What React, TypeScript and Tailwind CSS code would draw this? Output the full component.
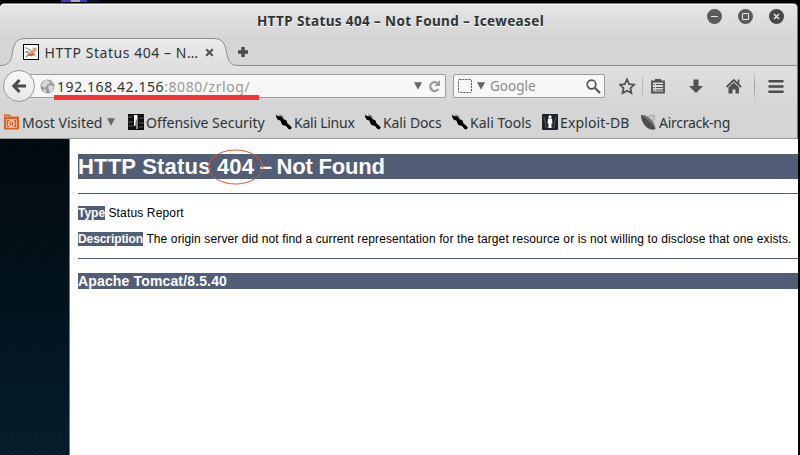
import type { ReactNode } from "react";

const sans = "font-['Noto_Sans','Open_Sans',sans-serif]";
const arial = "font-['Liberation_Sans',Arial,sans-serif]";

function TabShape() {
  const edge = "C7 27.500 10.500 25 12 17C14 6 15 .5 26 .5H213C223 .5 225 6 226.500 14C228.500 24 230 27.500 239 27.500H245";
  return (
    <svg className="absolute left-0 top-0" width="245" height="29" viewBox="0 0 245 29">
      <defs>
        <linearGradient id="tab" x1="0" y1="0" x2="0" y2="1">
          <stop offset="0" stopColor="#ebebeb" />
          <stop offset="1" stopColor="#dfdfdf" />
        </linearGradient>
      </defs>
      <path d={`M0 29V27.500${edge}V29Z`} fill="url(#tab)" />
      <path d={`M0 27.500${edge}`} fill="none" stroke="#8e8e8e" />
    </svg>
  );
}

function Favicon() {
  return (
    <svg width="16" height="16" viewBox="0 0 16 16" className="shrink-0">
      <rect x=".5" y=".5" width="15" height="15" fill="#fff" stroke="#000" />
      <path d="M2 3.500l3 1.500 3 1M2 8h3l1 2-3 3" stroke="#8d8d8d" fill="none" strokeWidth="1.300" />
      <path d="M9.500 3l1 1h2l1-1v3.500l-1.500 1.500-2-.5zM6 8l3-2 3 2-1.500 1.500-2.500.5z" fill="#dd9a78" />
      <path d="M5 10l3.500-.5 2.500-.5 1 1.500-3 1.800-3.500-.3z" fill="#e2602a" />
      <path d="M11 10.500l2.500 2" stroke="#999" />
    </svg>
  );
}

function WindowButton({ kind }: { kind: "min" | "max" | "close" }) {
  return (
    <svg width="16" height="16" viewBox="0 0 16 16">
      <circle cx="8.500" cy="8.500" r="7.500" fill={kind === "close" ? "#494949" : "#5b5b5b"} />
      {kind === "min" && <path d="M5 8.500h7" stroke="#e6e6e6" />}
      {kind === "max" && <path d="M5.500 5.500h6v6h-6z" fill="none" stroke="#e6e6e6" />}
      {kind === "close" && <path d="M6 6l5 5M11 6l-5 5" stroke="#e6e6e6" strokeWidth="1.500" />}
    </svg>
  );
}

function Globe() {
  return (
    <svg width="15" height="15" viewBox="0 0 15 15" className="shrink-0">
      <circle cx="7.500" cy="7.500" r="7" fill="#9a9a9a" />
      <path d="M6 1l3 1 1 2-3 2-2 3-3-2L1 7l2-4zM8 7l3-1 3 2-2 4-2 2-1-3zM3 10l3 1v3l-2-1zM11 2l2 2-2 0z" fill="#d9d9d9" />
    </svg>
  );
}

function Down() {
  return (
    <svg width="8" height="8" viewBox="0 0 8 8" className="shrink-0">
      <path d="M0 .3h8L4 7.800z" fill="#666" />
    </svg>
  );
}

function FolderIcon() {
  return (
    <svg width="16" height="16" viewBox="0 0 16 16" className="shrink-0">
      <path d="M0 .5h6l1 2h8v13H0z" fill="#d9622b" />
      <path d="M1 2.500h4.500M2.500 5.500h10v8h-10z" fill="none" stroke="#f1c3a8" strokeWidth=".8" />
      <circle cx="7.500" cy="9.500" r="2.800" fill="#d9622b" stroke="#fbe5d8" strokeWidth="1.200" />
      <path d="M7.500 8.500v2" stroke="#fbe5d8" />
    </svg>
  );
}

function OffsecIcon() {
  return (
    <svg width="16" height="16" viewBox="0 0 16 16" className="shrink-0">
      <path d="M0 0h16v16H0z" fill="#0c0e10" />
      <path d="M0 3h5M11 4h5M0 8h5M11 9h5M1 12h4M11 13h4" stroke="#3d4346" strokeWidth="1.500" />
      <path d="M6 1h3.500v14H8.500V6L8 5 7.500 12H6z" fill="#fff" />
    </svg>
  );
}

function KaliIcon() {
  return (
    <svg width="16" height="16" viewBox="0 0 16 16" className="shrink-0">
      <path d="M0 .5L2 2l4 .5L7.500 5l3 1.500 1 3L13.500 11l2.300 2.500-1.300 2L12.500 15 10 12 6.500 11 5 8.500 4.500 6.500 2 6 .3 3.500z" fill="#000" />
      <path d="M3 .8l3 .7 2 2" stroke="#555" strokeWidth=".7" fill="none" />
    </svg>
  );
}

function ExploitIcon() {
  return (
    <svg width="16" height="16" viewBox="0 0 16 16" className="shrink-0">
      <rect width="16" height="16" rx="1" fill="#1b2228" />
      <path d="M2 3l2 9M14 3l-2 9M3 13h10" stroke="#56626b" />
      <circle cx="8" cy="2.800" r="1.600" fill="#fff" />
      <path d="M6 4.500h4l.5 5H9.500L9.500 14H6.500V9.500h-1z" fill="#fff" />
    </svg>
  );
}

function DishIcon() {
  return (
    <svg width="16" height="16" viewBox="0 0 16 16" className="shrink-0">
      <path d="M6 1l7-1 2 3-1 8z" fill="#c9cbce" />
      <path d="M5 3l8-2-2 9" stroke="#a8a8a8" fill="none" />
      <path d="M0 1C6 0 14 8 14.500 15c-3 1.500-8 .5-11-4C1 8 0 4 0 1z" fill="#4d4d4d" />
      <path d="M0 1c5 3 11 8 14.500 14C14 8 6 0 0 1z" fill="#777" />
    </svg>
  );
}

function Bookmark({ icon, label, className, menu }: { icon: ReactNode; label: string; className: string; menu?: boolean }) {
  return (
    <div className={`flex shrink-0 items-center gap-[2.500px] text-[14px] whitespace-nowrap ${className}`}>
      {icon}
      <span>{label}</span>
      {menu && (
        <span className="ml-[2px]">
          <Down />
        </span>
      )}
    </div>
  );
}

export default function App() {
  return (
    <div className={`flex h-[455px] w-[800px] flex-col overflow-hidden bg-black ${sans} text-[#2e3436]`}>
      <div className="flex h-[3px] shrink-0 pl-[61px]">
        <div className="h-[2px] w-[10px] bg-[#4336b8]" />
        <div className="h-[2px] w-[9px] bg-[#aaa9b5]" />
        <div className="h-[2px] w-[7px] bg-[#4336b8]" />
        <div className="h-[2px] w-[12px] bg-[#06142a]" />
      </div>
      <div className="flex h-[136px] w-[798px] shrink-0 flex-col rounded-t-[5px] border-r border-t border-[#777] bg-[#d5d5d5]">
        <header className="relative flex h-[34px] shrink-0 items-start justify-center rounded-t-[4px] border-t border-white bg-linear-to-b from-[#e6e6e6] to-[#d5d5d5] pt-[6px]">
          <h1 className="ml-[4px] text-[13.500px] leading-[20px] font-bold tracking-[0.380px] [text-shadow:0_1px_0_#fff]">HTTP Status 404 – Not Found – Iceweasel</h1>
          <div className="absolute right-[13px] top-[3px] flex gap-[15px]">
            <WindowButton kind="min" />
            <WindowButton kind="max" />
            <WindowButton kind="close" />
          </div>
        </header>
        <div className="relative flex h-[28px] shrink-0 items-center border-b border-[#8e8e8e]">
          <TabShape />
          <div className="relative flex w-full items-center pl-[23px] pt-px">
            <Favicon />
            <span className="ml-[5.500px] w-[155px] whitespace-nowrap text-[14px] tracking-[0.560px]">HTTP Status 404 – N…</span>
            <svg className="ml-[5px]" width="9" height="9" viewBox="0 0 9 9">
              <path d="M1.200 1.200l6.600 6.600M7.800 1.200l-6.600 6.600" stroke="#555" strokeWidth="2.200" />
            </svg>
            <svg className="ml-[24px]" width="10" height="10" viewBox="0 0 10 10">
              <path d="M5 0v10M0 5h10" stroke="#4a4a4a" strokeWidth="3.500" />
            </svg>
          </div>
        </div>
        <nav className="relative flex h-[40px] shrink-0 items-center bg-linear-to-b from-[#e0e0e0] to-[#d5d5d5]">
          <div className="ml-[20px] flex h-[24px] w-[426px] items-center rounded-r-[2px] border border-[#9c9c9c] bg-[#f7f7f7] pl-[19px] pr-[4px]">
            <Globe />
            <span className="ml-[2px] text-[14px] tracking-[0.560px]">
              192.168.42.156<span className="text-[#999]">:8080/zrlog/</span>
            </span>
            <span className="ml-auto" />
            <Down />
            <svg className="ml-[6px]" width="13" height="13" viewBox="0 0 13 13">
              <path d="M10.500 9A4.500 4.500 0 1 1 9.500 3" fill="none" stroke="#999" strokeWidth="2.200" />
              <path d="M12 0v6H6.500z" fill="#999" />
            </svg>
          </div>
          <div className="absolute left-[3px] top-[4px] flex size-[32px] items-center justify-center rounded-full border border-[#999] bg-linear-to-b from-[#fafafa] to-[#e6e6e6]">
            <svg width="16" height="16" viewBox="0 0 16 16">
              <path d="M8.500 2L2.800 8l5.700 6M3 8h12" fill="none" stroke="#4b4b4b" strokeWidth="3" />
            </svg>
          </div>
          <div className="absolute left-[54px] top-[29px] h-[5px] w-[205px] bg-[#fb3236]" />
          <div className="ml-[7px] flex h-[24px] w-[152px] items-center rounded-[2px] border border-[#9c9c9c] bg-[#f7f7f7] pl-[4px] pr-[3px]">
            <svg width="14" height="14" viewBox="0 0 14 14">
              <rect x=".5" y=".5" width="13" height="13" rx="1" fill="none" stroke="#555" strokeDasharray="2 1" />
            </svg>
            <span className="w-[5px]" />
            <Down />
            <span className="ml-[5px] text-[13.500px] text-[#8c8c8c]">Google</span>
            <svg className="ml-auto" width="15" height="15" viewBox="0 0 15 15">
              <circle cx="5.500" cy="5.500" r="4.300" fill="none" stroke="#555" strokeWidth="1.700" />
              <path d="M8.500 8.500l5.500 5.500" stroke="#555" strokeWidth="2.200" />
            </svg>
          </div>
          <svg className="ml-[14px] shrink-0" width="178" height="34" viewBox="0 0 178 34">
            <defs>
              <linearGradient id="sep" x1="0" y1="0" x2="0" y2="1">
                <stop offset="0" stopColor="#9a9a9a" stopOpacity="0" />
                <stop offset=".5" stopColor="#9a9a9a" />
                <stop offset="1" stopColor="#9a9a9a" stopOpacity="0" />
              </linearGradient>
            </defs>
            <path d="M8 10l2.200 4.800 5 .6-3.800 3.500 1.100 5L8 21.400l-4.500 2.500 1.100-5L.8 15.400l5-.6z" transform="translate(0 .3)" fill="none" stroke="#4f4f4f" strokeWidth="1.700" />
            <path d="M23.500 8v18" stroke="#b9b9b9" />
            <path d="M33 12.500h12v11H33z" fill="none" stroke="#505050" strokeWidth="1.800" />
            <path d="M36 10h6v3h-6z" fill="#505050" />
            <path d="M34.500 15.500h1.500M37 15.500h7M34.500 18.500h1.500M37 18.500h7M34.500 21h1.500M37 21h7" stroke="#505050" />
            <path d="M74.500 10.500h5v6.500H84l-7 7-7-7h4.500z" fill="#505050" />
            <path d="M107.500 18l7.300-7 7.300 7M119.500 10.500v4" fill="none" stroke="#505050" strokeWidth="1.800" />
            <path d="M109.500 18.500l5.300-5 5.200 5V24.500H116.500v-4h-3v4h-4z" fill="#505050" />
            <path d="M135 1h1v32h-1z" fill="url(#sep)" />
            <path d="M150.500 12.300h13M150.500 17.500h13M150.500 22.700h13" stroke="#4c4c4c" strokeWidth="2.600" strokeLinecap="round" />
          </svg>
        </nav>
        <div className="flex h-[33px] shrink-0 items-center border-b border-[#999] pl-[3.500px]">
          <Bookmark icon={<FolderIcon />} label="Most Visited" className="w-[124px]" menu />
          <Bookmark icon={<OffsecIcon />} label="Offensive Security" className="w-[148px]" />
          <Bookmark icon={<KaliIcon />} label="Kali Linux" className="w-[89px] tracking-[-0.250px]" />
          <Bookmark icon={<KaliIcon />} label="Kali Docs" className="w-[87px] tracking-[-0.100px]" />
          <Bookmark icon={<KaliIcon />} label="Kali Tools" className="w-[90px]" />
          <Bookmark icon={<ExploitIcon />} label="Exploit-DB" className="w-[99px] tracking-[0.120px]" />
          <Bookmark icon={<DishIcon />} label="Aircrack-ng" className="w-[100px] tracking-[-0.280px]" />
        </div>
      </div>
      <div className="flex min-h-0 flex-1">
        <aside className="h-full w-[69px] shrink-0 bg-linear-to-b from-[#020b10] via-[#02141f] to-[#062030]">
          <div className="h-full bg-[repeating-linear-gradient(150deg,#00000038_0px,#00000038_1px,transparent_1px,transparent_3px)]" />
        </aside>
        <main className={`relative h-full w-[729px] border-l border-[#777] bg-white pl-[8px] pt-[15px] text-black ${arial}`}>
          <h2 className="h-[25px] whitespace-nowrap bg-[#525d76] text-[22px] leading-[25px] font-bold text-white">
            <span className="tracking-[0.200px]">HTTP Status 404</span>
            <span className="tracking-[-0.700px]"> – </span>
            <span className="tracking-[-0.200px]">Not Found</span>
          </h2>
          <svg className="absolute left-[137px] top-[9px]" width="58" height="38" viewBox="0 0 58 38">
            <ellipse cx="28.500" cy="19" rx="27" ry="17" fill="none" stroke="#e8572f" />
          </svg>
          <hr className="mt-[14px] border-[#525d76]" />
          <p className="mt-[12px] text-[12px] leading-[14px]">
            <b className="bg-[#525d76] text-white">Type</b> <span className="tracking-[0.150px]">Status Report</span>
          </p>
          <p className="mt-[12px] whitespace-nowrap text-[12px] leading-[14px]">
            <b className="bg-[#525d76] tracking-[-0.090px] text-white">Description</b>{" "}
            <span className="tracking-[0.118px]">
              The origin server did not find a current representation for the target resource or is not willing to disclose that one exists.
            </span>
          </p>
          <hr className="mt-[12px] border-[#525d76]" />
          <h3 className="mt-[14px] h-[16px] bg-[#525d76] text-[14px] leading-[16px] font-bold tracking-[0.150px] text-white">Apache Tomcat/8.5.40</h3>
        </main>
      </div>
    </div>
  );
}
